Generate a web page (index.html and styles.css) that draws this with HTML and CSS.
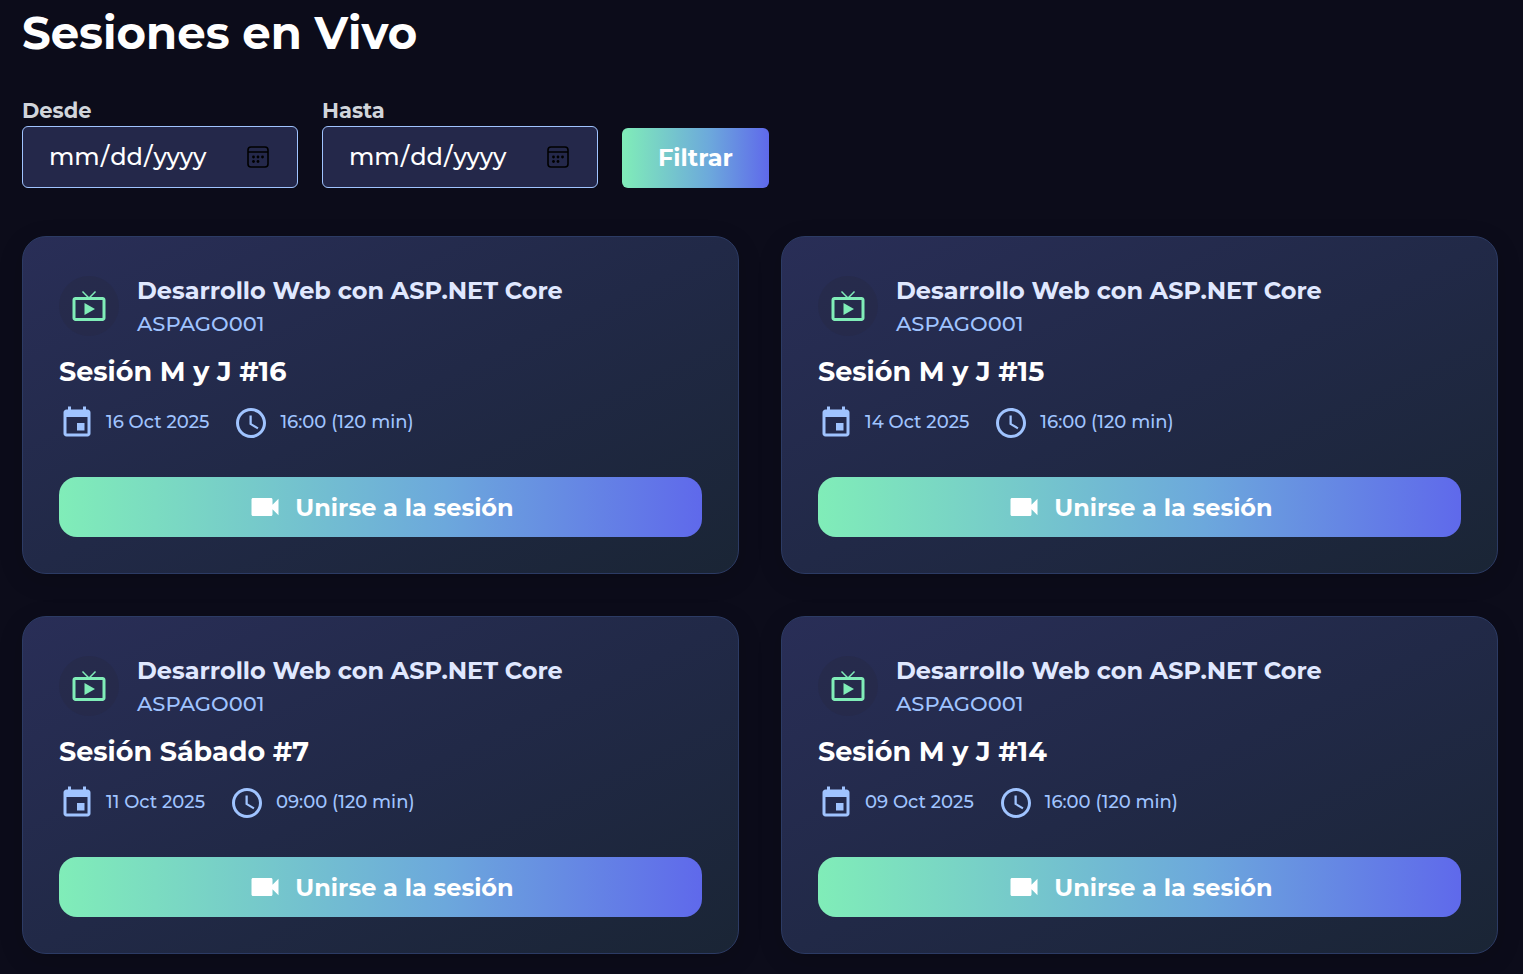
FILE: index.html
```
<!DOCTYPE html>
<html lang="es">
<head>
<meta charset="utf-8">
<meta name="viewport" content="width=device-width, initial-scale=1">
<title>Sesiones en Vivo</title>
<link rel="stylesheet" href="styles.css">
</head>
<body>
<svg class="sprite" aria-hidden="true">
  <symbol id="tv" viewBox="0 0 24 24"><path d="M21 6h-7.59l3.29-3.29L16 2l-4 4-4-4-.7.71L10.59 6H3c-1.1 0-2 .89-2 2v12c0 1.1.9 2 2 2h18c1.1 0 2-.9 2-2V8c0-1.11-.9-2-2-2zm0 14H3V8h18v12zM9 10v8l7-4z"/></symbol>
  <symbol id="event" viewBox="0 0 24 24"><path d="M17 12h-5v5h5v-5zM16 1v2H8V1H6v2H5c-1.11 0-1.99.9-1.99 2L3 19c0 1.1.89 2 2 2h14c1.1 0 2-.9 2-2V5c0-1.1-.9-2-2-2h-1V1h-2zm3 18H5V8h14v11z"/></symbol>
  <symbol id="clock" viewBox="0 0 24 24"><path d="M11.99 2C6.47 2 2 6.48 2 12s4.47 10 9.99 10C17.52 22 22 17.52 22 12S17.52 2 11.99 2zM12 20c-4.42 0-8-3.58-8-8s3.58-8 8-8 8 3.58 8 8-3.58 8-8 8zm.5-13H11v6l5.25 3.15.75-1.23-4.5-2.67z"/></symbol>
  <symbol id="cam" viewBox="0 0 24 24"><path d="M17 10.5V7c0-.55-.45-1-1-1H4c-.55 0-1 .45-1 1v10c0 .55.45 1 1 1h12c.55 0 1-.45 1-1v-3.5l4 4v-11l-4 4z"/></symbol>
</svg>
<main class="page">
  <h1 class="page-title">Sesiones en Vivo</h1>
  <form class="filters">
    <div class="field">
      <label for="desde">Desde</label>
      <input type="date" id="desde">
    </div>
    <div class="field">
      <label for="hasta">Hasta</label>
      <input type="date" id="hasta">
    </div>
    <button type="button" class="filter-button">Filtrar</button>
  </form>
  <section class="sessions">
    <article class="card">
      <header class="course">
        <span class="course-icon"><svg class="icon"><use href="#tv"/></svg></span>
        <div>
          <h2 class="course-name">Desarrollo Web con ASP.NET Core</h2>
          <p class="course-code">ASPAGO001</p>
        </div>
      </header>
      <h3 class="session-name">Sesión M y J #16</h3>
      <div class="meta">
        <span class="meta-item"><svg class="icon"><use href="#event"/></svg>16 Oct 2025</span>
        <span class="meta-item"><svg class="icon"><use href="#clock"/></svg>16:00 (120 min)</span>
      </div>
      <a class="join" href="#"><svg class="icon"><use href="#cam"/></svg>Unirse a la sesión</a>
    </article>
    <article class="card">
      <header class="course">
        <span class="course-icon"><svg class="icon"><use href="#tv"/></svg></span>
        <div>
          <h2 class="course-name">Desarrollo Web con ASP.NET Core</h2>
          <p class="course-code">ASPAGO001</p>
        </div>
      </header>
      <h3 class="session-name">Sesión M y J #15</h3>
      <div class="meta">
        <span class="meta-item"><svg class="icon"><use href="#event"/></svg>14 Oct 2025</span>
        <span class="meta-item"><svg class="icon"><use href="#clock"/></svg>16:00 (120 min)</span>
      </div>
      <a class="join" href="#"><svg class="icon"><use href="#cam"/></svg>Unirse a la sesión</a>
    </article>
    <article class="card">
      <header class="course">
        <span class="course-icon"><svg class="icon"><use href="#tv"/></svg></span>
        <div>
          <h2 class="course-name">Desarrollo Web con ASP.NET Core</h2>
          <p class="course-code">ASPAGO001</p>
        </div>
      </header>
      <h3 class="session-name">Sesión Sábado #7</h3>
      <div class="meta">
        <span class="meta-item"><svg class="icon"><use href="#event"/></svg>11 Oct 2025</span>
        <span class="meta-item"><svg class="icon"><use href="#clock"/></svg>09:00 (120 min)</span>
      </div>
      <a class="join" href="#"><svg class="icon"><use href="#cam"/></svg>Unirse a la sesión</a>
    </article>
    <article class="card">
      <header class="course">
        <span class="course-icon"><svg class="icon"><use href="#tv"/></svg></span>
        <div>
          <h2 class="course-name">Desarrollo Web con ASP.NET Core</h2>
          <p class="course-code">ASPAGO001</p>
        </div>
      </header>
      <h3 class="session-name">Sesión M y J #14</h3>
      <div class="meta">
        <span class="meta-item"><svg class="icon"><use href="#event"/></svg>09 Oct 2025</span>
        <span class="meta-item"><svg class="icon"><use href="#clock"/></svg>16:00 (120 min)</span>
      </div>
      <a class="join" href="#"><svg class="icon"><use href="#cam"/></svg>Unirse a la sesión</a>
    </article>
  </section>
</main>
</body>
</html>
```
FILE: styles.css
```
* { box-sizing: border-box; }

body {
  margin: 0;
  background: #0c0c1a;
  color: #fff;
  font-family: Montserrat, Inter, sans-serif;
}

.sprite { display: none; }

.page { padding: 6px 25px 20px 22px; }

.page-title {
  margin: 0 0 38px;
  font-size: 45px;
  line-height: 54px;
  font-weight: 700;
}

.filters {
  display: flex;
  align-items: flex-end;
  gap: 24px;
  margin-bottom: 48px;
}

.field {
  display: flex;
  flex-direction: column;
  width: 276px;
}

.field label {
  margin-bottom: 2px;
  color: #d1d5db;
  font-size: 21px;
  line-height: 26px;
  font-weight: 700;
}

.field input {
  height: 62px;
  padding: 0 27px 2px 25px;
  border: 1px solid #a0c4ff;
  border-radius: 6px;
  background: #24284a;
  color: #fff;
  font-family: inherit;
  font-size: 24px;
  font-weight: 500;
}

.field input::-webkit-calendar-picker-indicator {
  width: 24px;
  height: 24px;
  padding: 0;
  background: url("data:image/svg+xml,%3Csvg xmlns='http://www.w3.org/2000/svg' viewBox='0 0 24 24'%3E%3Crect x='2' y='3' width='20' height='20' rx='3' fill='none' stroke='%23000' stroke-width='1.6'/%3E%3Cpath d='M2 8h20' stroke='%23000' stroke-width='1.6'/%3E%3Cg fill='%23000'%3E%3Ccircle cx='7.5' cy='13' r='1.4'/%3E%3Ccircle cx='12' cy='13' r='1.4'/%3E%3Ccircle cx='16.5' cy='13' r='1.4'/%3E%3Ccircle cx='7.5' cy='17.5' r='1.4'/%3E%3Ccircle cx='12' cy='17.5' r='1.4'/%3E%3C/g%3E%3C/svg%3E") center / 24px 24px no-repeat;
}

.filter-button {
  height: 60px;
  padding: 0 36px 2px;
  border: 0;
  border-radius: 6px;
  background: linear-gradient(90deg, #80edb8, #6ca8dc 60%, #5f69eb);
  color: #fff;
  font-family: inherit;
  font-size: 24px;
  font-weight: 700;
}

.sessions {
  display: grid;
  grid-template-columns: 1fr 1fr;
  gap: 42px;
}

.card {
  padding: 36px;
  border: 1px solid #2c3b64;
  border-radius: 24px;
  background: linear-gradient(155deg, #292e57, #212947 50%, #1a2535);
  box-shadow: 0 6px 24px rgba(0, 0, 0, 0.15);
}

.icon {
  flex: none;
  width: 36px;
  height: 36px;
  fill: currentColor;
}

.course {
  display: flex;
  align-items: center;
  gap: 18px;
  margin-bottom: 15px;
}

.course-icon {
  display: flex;
  align-items: center;
  justify-content: center;
  width: 60px;
  height: 60px;
  border-radius: 50%;
  background: rgba(38, 41, 72, 0.6);
  color: #80edb8;
}

.course-name {
  margin: 0;
  color: #e0e8ff;
  font-size: 24px;
  line-height: 36px;
  font-weight: 700;
}

.course-code {
  margin: 0;
  color: #a0c4ff;
  font-size: 21px;
  line-height: 30px;
  font-weight: 500;
}

.session-name {
  margin: 0 0 15px;
  font-size: 27px;
  line-height: 36px;
  font-weight: 700;
}

.meta {
  display: flex;
  gap: 24px;
  margin-bottom: 36px;
  color: #a0c4ff;
  font-size: 18px;
  line-height: 34px;
  font-weight: 500;
}

.meta-item {
  display: flex;
  gap: 11px;
}

.join {
  display: flex;
  align-items: center;
  justify-content: center;
  gap: 12px;
  height: 60px;
  border-radius: 18px;
  background: linear-gradient(90deg, #80edb8, #6ca8dc 60%, #5f69eb);
  color: #fff;
  font-size: 24px;
  line-height: 27px;
  font-weight: 700;
  text-decoration: none;
}
```
